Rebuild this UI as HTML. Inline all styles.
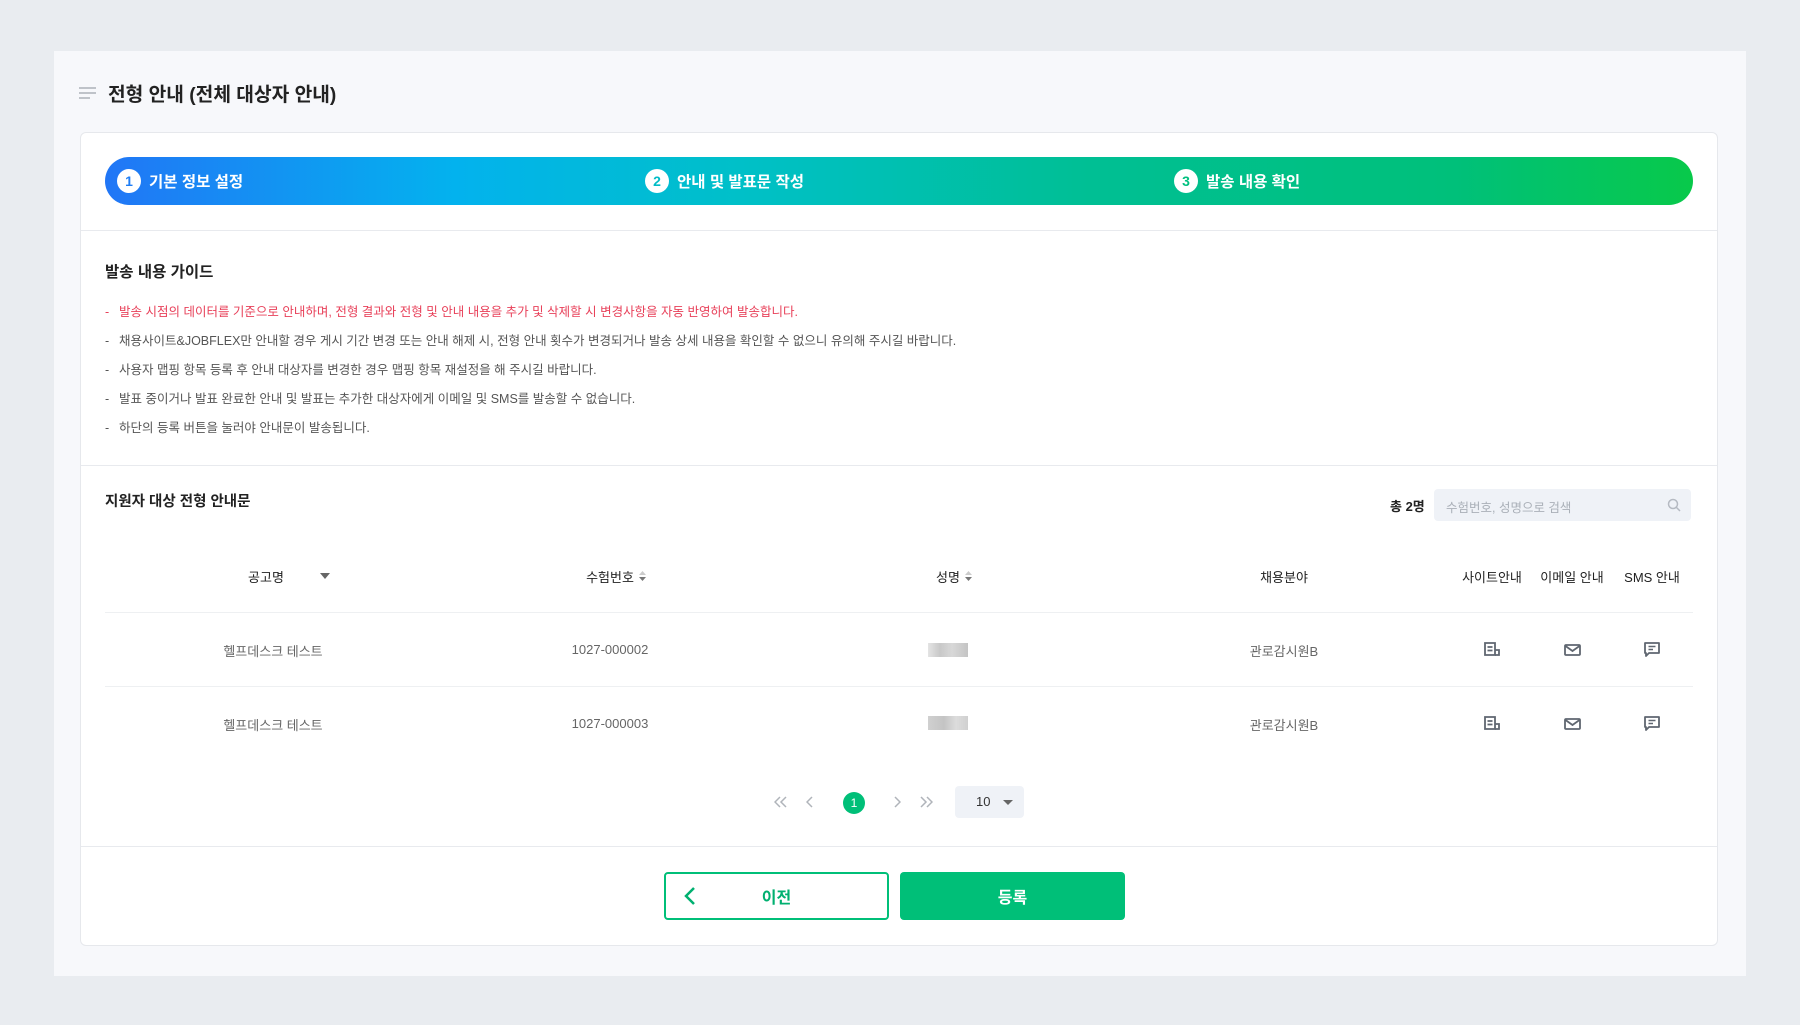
<!DOCTYPE html>
<html><head><meta charset="utf-8"><style>
*{margin:0;padding:0;box-sizing:border-box}
body{width:1800px;height:1025px;background:#e9ecf0;font-family:"Liberation Sans","Noto Sans CJK KR",sans-serif;position:relative;overflow:hidden;color:#222}
.a{position:absolute;white-space:nowrap}
.panel{left:54px;top:51px;width:1692px;height:925px;background:#f7f8fb}
.card{left:80px;top:132px;width:1638px;height:814px;background:#fff;border:1px solid #e6e8ec;border-radius:6px}
.hl{position:absolute;height:1px;background:#e8eaee}
.bar{left:105px;top:157px;width:1588px;height:48px;border-radius:24px;background:linear-gradient(90deg,#2176f6 0%,#03b2ee 22%,#00c0c8 40%,#00bf94 62%,#00c07a 85%,#08c94a 100%)}
.st{position:absolute;top:0;height:48px;display:flex;align-items:center;color:#fff;font-size:15.5px;font-weight:bold}
.st i{font-style:normal;width:24px;height:24px;border-radius:50%;background:#fff;color:#1a8ef0;font-size:14px;display:flex;align-items:center;justify-content:center;margin-right:8px}
.li{font-size:12.5px;color:#555;left:105px}
.li b{font-weight:normal;display:inline-block;width:14px}
.th{font-size:13px;color:#222;top:567px;transform:translateX(-50%)}
.td{font-size:13px;color:#666;transform:translateX(-50%)}
</style></head><body>
<div class="a panel"></div>
<svg class="a" style="left:79px;top:87px" width="18" height="12"><path d="M0 1h17M0 6h17M0 11h11" stroke="#bfc3c9" stroke-width="2"/></svg>
<div class="a" style="left:108px;top:79px;font-size:19.2px;font-weight:bold;color:#222">전형 안내 (전체 대상자 안내)</div>
<div class="a card"></div>
<div class="a bar">
 <div class="st" style="left:12px"><i style="color:#1e7df5">1</i>기본 정보 설정</div>
 <div class="st" style="left:540px"><i style="color:#00bcc6">2</i>안내 및 발표문 작성</div>
 <div class="st" style="left:1069px"><i style="color:#00c07f">3</i>발송 내용 확인</div>
</div>
<div class="hl" style="left:81px;top:230px;width:1636px"></div>
<div class="a" style="left:105px;top:260px;font-size:15.5px;font-weight:bold">발송 내용 가이드</div>
<div class="a li" style="top:301px;color:#e8415a"><b>-</b>발송 시점의 데이터를 기준으로 안내하며, 전형 결과와 전형 및 안내 내용을 추가 및 삭제할 시 변경사항을 자동 반영하여 발송합니다.</div>
<div class="a li" style="top:330px"><b>-</b>채용사이트&amp;JOBFLEX만 안내할 경우 게시 기간 변경 또는 안내 해제 시, 전형 안내 횟수가 변경되거나 발송 상세 내용을 확인할 수 없으니 유의해 주시길 바랍니다.</div>
<div class="a li" style="top:359px"><b>-</b>사용자 맵핑 항목 등록 후 안내 대상자를 변경한 경우 맵핑 항목 재설정을 해 주시길 바랍니다.</div>
<div class="a li" style="top:388px"><b>-</b>발표 중이거나 발표 완료한 안내 및 발표는 추가한 대상자에게 이메일 및 SMS를 발송할 수 없습니다.</div>
<div class="a li" style="top:417px"><b>-</b>하단의 등록 버튼을 눌러야 안내문이 발송됩니다.</div>
<div class="hl" style="left:81px;top:465px;width:1636px"></div>
<div class="a" style="left:105px;top:490px;font-size:14.5px;font-weight:bold">지원자 대상 전형 안내문</div>
<div class="a" style="left:1390px;top:496px;font-size:13px;font-weight:bold">총 2명</div>
<div class="a" style="left:1434px;top:489px;width:257px;height:32px;background:#eff2f7;border-radius:4px"></div>
<div class="a" style="left:1446px;top:497px;font-size:12.5px;color:#aab0b8">수험번호, 성명으로 검색</div>
<svg class="a" style="left:1667px;top:498px" width="14" height="14"><circle cx="6" cy="6" r="4.5" fill="none" stroke="#b5bac2" stroke-width="1.5"/><path d="M9.5 9.5l3.5 3.5" stroke="#b5bac2" stroke-width="1.5"/></svg>
<div class="a th" style="left:266px">공고명</div>
<svg class="a" style="left:320px;top:573px" width="10" height="6"><path d="M0 0h10L5 6z" fill="#666"/></svg>
<div class="a th" style="left:610px">수험번호</div>
<svg class="a" style="left:639px;top:570px" width="7" height="12"><path d="M0 5h7L3.5 1z" fill="#ccc"/><path d="M0 7h7L3.5 11z" fill="#777"/></svg>
<div class="a th" style="left:948px">성명</div>
<svg class="a" style="left:965px;top:570px" width="7" height="12"><path d="M0 5h7L3.5 1z" fill="#ccc"/><path d="M0 7h7L3.5 11z" fill="#777"/></svg>
<div class="a th" style="left:1284px">채용분야</div>
<div class="a th" style="left:1492px">사이트안내</div>
<div class="a th" style="left:1572px">이메일 안내</div>
<div class="a th" style="left:1652px">SMS 안내</div>
<div class="hl" style="left:105px;top:612px;width:1588px;background:#eef0f2"></div>
<div class="hl" style="left:105px;top:686px;width:1588px;background:#eef0f2"></div>
<div class="a td" style="left:273px;top:641px">헬프데스크 테스트</div>
<div class="a td" style="left:610px;top:642px">1027-000002</div>
<div class="a" style="left:928px;top:643px;width:40px;height:14px;background:linear-gradient(90deg,#e4e4e4,#c8c8c8 30%,#d8d8d8 60%,#c4c4c4)"></div>
<div class="a td" style="left:1284px;top:641px">관로감시원B</div>
<div class="a td" style="left:273px;top:715px">헬프데스크 테스트</div>
<div class="a td" style="left:610px;top:716px">1027-000003</div>
<div class="a" style="left:928px;top:716px;width:40px;height:14px;background:linear-gradient(90deg,#d0d0d0,#c4c4c4 40%,#dcdcdc 70%,#d0d0d0)"></div>
<div class="a td" style="left:1284px;top:715px">관로감시원B</div>
<svg width="0" height="0" style="position:absolute"><defs>
<g id="i1"><path d="M1 1h10v12H1z M3.5 5h5M3.5 8.5h5" fill="none" stroke="#5f6670" stroke-width="1.8"/><path d="M11 8h4v5h-4" fill="none" stroke="#5f6670" stroke-width="1.8"/></g>
<g id="i2"><rect x="1" y="2" width="15" height="10" rx="1" fill="none" stroke="#5f6670" stroke-width="1.8"/><path d="M1.5 3l7 5 7-5" fill="none" stroke="#5f6670" stroke-width="1.8"/></g>
<g id="i3"><path d="M1 1h14v10H5l-3 3V11H1z" fill="none" stroke="#5f6670" stroke-width="1.8" stroke-linejoin="round"/><path d="M4.5 4.5h7M4.5 7.5h4.5" stroke="#5f6670" stroke-width="1.6"/></g>
</defs></svg>
<svg class="a" style="left:1484px;top:642px" width="17" height="15"><use href="#i1"/></svg>
<svg class="a" style="left:1564px;top:643px" width="17" height="14"><use href="#i2"/></svg>
<svg class="a" style="left:1644px;top:642px" width="17" height="16"><use href="#i3"/></svg>
<svg class="a" style="left:1484px;top:716px" width="17" height="15"><use href="#i1"/></svg>
<svg class="a" style="left:1564px;top:717px" width="17" height="14"><use href="#i2"/></svg>
<svg class="a" style="left:1644px;top:716px" width="17" height="16"><use href="#i3"/></svg>
<svg class="a" style="left:774px;top:796px" width="14" height="12"><path d="M6 1L1 6l5 5M12 1L7 6l5 5" fill="none" stroke="#b0b4ba" stroke-width="1.5"/></svg>
<svg class="a" style="left:806px;top:796px" width="8" height="12"><path d="M6 1L1 6l5 5" fill="none" stroke="#b0b4ba" stroke-width="1.5"/></svg>
<div class="a" style="left:843px;top:792px;width:22px;height:22px;border-radius:50%;background:#00bf78;color:#fff;font-size:12px;display:flex;align-items:center;justify-content:center">1</div>
<svg class="a" style="left:893px;top:796px" width="8" height="12"><path d="M2 1l5 5-5 5" fill="none" stroke="#b0b4ba" stroke-width="1.5"/></svg>
<svg class="a" style="left:919px;top:796px" width="14" height="12"><path d="M2 1l5 5-5 5M8 1l5 5-5 5" fill="none" stroke="#b0b4ba" stroke-width="1.5"/></svg>
<div class="a" style="left:955px;top:786px;width:69px;height:32px;background:#eff2f7;border-radius:4px"></div>
<div class="a" style="left:976px;top:794px;font-size:13px;color:#333">10</div>
<svg class="a" style="left:1003px;top:800px" width="10" height="6"><path d="M0 0h10L5 5z" fill="#666"/></svg>
<div class="hl" style="left:81px;top:846px;width:1636px"></div>
<div class="a" style="left:664px;top:872px;width:225px;height:48px;border:2px solid #00bf78;border-radius:4px;color:#00b070;font-size:16px;font-weight:bold;display:flex;align-items:center;justify-content:center">이전</div>
<svg class="a" style="left:684px;top:886px" width="12" height="20"><path d="M10 2L2 10l8 8" fill="none" stroke="#00b070" stroke-width="2.5"/></svg>
<div class="a" style="left:900px;top:872px;width:225px;height:48px;background:#00bf78;border-radius:4px;color:#fff;font-size:16px;font-weight:bold;display:flex;align-items:center;justify-content:center">등록</div>
</body></html>
